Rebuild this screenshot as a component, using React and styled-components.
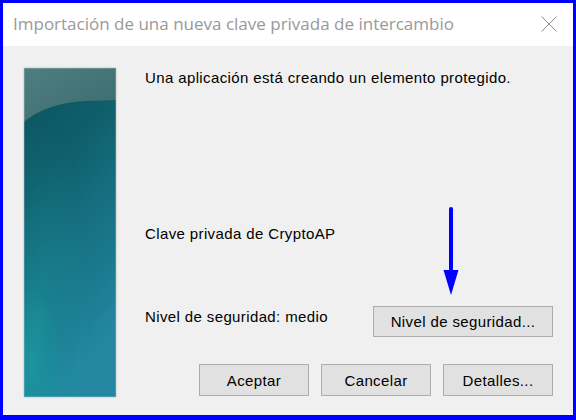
import React from "react";
import styled, { createGlobalStyle } from "styled-components";

const GlobalStyle = createGlobalStyle`
  html, body {
    margin: 0;
    padding: 0;
    background: #f0f0f0;
  }
  * {
    box-sizing: border-box;
  }
`;

const Window = styled.div`
  position: relative;
  width: 576px;
  height: 420px;
  border-style: solid;
  border-color: #0000ff;
  border-width: 3px 3px 5px 3px;
  background: #f0f0f0;
  display: flex;
  flex-direction: column;
  font-family: "Liberation Sans", Arial, sans-serif;
`;

const TitleBar = styled.div`
  height: 43px;
  flex-shrink: 0;
  background: #ffffff;
  display: flex;
  align-items: center;
  justify-content: space-between;
  padding: 0 16px 0 10px;
`;

const Title = styled.div`
  font-family: "Open Sans", "Noto Sans", sans-serif;
  font-size: 17px;
  color: #999999;
  padding-bottom: 2px;
`;

const CloseButton = styled.div`
  width: 16px;
  height: 16px;
  display: flex;
  margin-bottom: 2px;
`;

const Body = styled.div`
  flex: 1;
  display: flex;
  padding: 22px 20px 0 21px;
`;

const SidePicture = styled.div`
  width: 92px;
  height: 329px;
  flex-shrink: 0;
  box-shadow: 0 0 2px rgba(0, 0, 0, 0.25);
  svg {
    display: block;
  }
`;

const Content = styled.div`
  flex: 1;
  margin-left: 29px;
  display: flex;
  flex-direction: column;
  font-size: 15px;
  letter-spacing: 0.38px;
  line-height: 18px;
  color: #000;
`;

const Line = styled.div`
  margin-top: ${(p) => p.$top || 0}px;
`;

const Row = styled.div`
  display: flex;
  justify-content: ${(p) => p.$justify || "flex-start"};
  align-items: flex-start;
  gap: 12px;
  margin-top: ${(p) => p.$top || 0}px;
`;

const Button = styled.button`
  font-family: "Liberation Sans", Arial, sans-serif;
  font-size: 15px;
  letter-spacing: 0.38px;
  color: #000;
  width: ${(p) => p.$width}px;
  height: ${(p) => p.$height}px;
  background: #e1e1e1;
  border: 1px solid #adadad;
  padding: 0;
  margin: 0;
`;

const Arrow = styled.svg`
  position: absolute;
  left: 438px;
  top: 204px;
`;

const Picture = () => (
  <svg width="92" height="329" viewBox="0 0 92 329">
    <defs>
      <linearGradient id="base" x1="0" y1="0" x2="0.3" y2="1">
        <stop offset="0" stopColor="#0b5460" />
        <stop offset="0.35" stopColor="#0f5e6b" />
        <stop offset="0.6" stopColor="#166f80" />
        <stop offset="0.85" stopColor="#1c7d93" />
        <stop offset="1" stopColor="#2487a2" />
      </linearGradient>
      <radialGradient id="glow" cx="0.15" cy="0.78" r="0.6">
        <stop offset="0" stopColor="#1c9aa2" stopOpacity="0.8" />
        <stop offset="0.6" stopColor="#1a9098" stopOpacity="0.35" />
        <stop offset="1" stopColor="#1a9098" stopOpacity="0" />
      </radialGradient>
      <linearGradient id="top" x1="0" y1="0" x2="1" y2="1">
        <stop offset="0" stopColor="#4f7e80" />
        <stop offset="1" stopColor="#3a6b6e" />
      </linearGradient>
    </defs>
    <rect width="92" height="329" fill="url(#base)" />
    <path d="M0,190 Q30,240 50,329 L0,329 Z" fill="url(#glow)" />
    <rect width="92" height="329" fill="url(#glow)" opacity="0.5" />
    <path d="M0,0 H92 V32 L62,33 Q22,35 0,54 Z" fill="url(#top)" />
    <rect x="0.5" y="0.5" width="91" height="328" fill="none" stroke="rgba(255,255,255,0.18)" />
  </svg>
);

const App = () => {
  return (
    <>
      <GlobalStyle />
      <Window>
        <TitleBar>
          <Title>Importación de una nueva clave privada de intercambio</Title>
          <CloseButton>
            <svg width="16" height="16" viewBox="0 0 16 16">
              <path d="M0.5 0.5 L15.5 15.5 M15.5 0.5 L0.5 15.5" stroke="#888" strokeWidth="1" />
            </svg>
          </CloseButton>
        </TitleBar>
        <Body>
          <SidePicture>
            <Picture />
          </SidePicture>
          <Content>
            <Line $top={1}>Una aplicación está creando un elemento protegido.</Line>
            <Line $top={138}>Clave privada de CryptoAP</Line>
            <Row $justify="space-between" $top={63}>
              <Line $top={2}>Nivel de seguridad: medio</Line>
              <Button $width={180} $height={31}>Nivel de seguridad...</Button>
            </Row>
            <Row $justify="flex-end" $top={27}>
              <Button $width={110} $height={32}>Aceptar</Button>
              <Button $width={110} $height={32}>Cancelar</Button>
              <Button $width={110} $height={32}>Detalles...</Button>
            </Row>
          </Content>
        </Body>
        <Arrow width="20" height="92" viewBox="0 0 20 92">
          <rect x="8" y="0" width="4" height="68" rx="2" fill="#0000ff" />
          <path d="M2.5 63 L17.5 63 L10 88 Z" fill="#0000ff" />
        </Arrow>
      </Window>
    </>
  );
};

export default App;
